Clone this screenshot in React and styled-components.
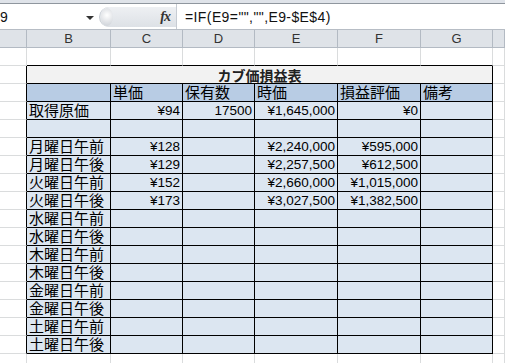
import React from 'react';
import styled, { createGlobalStyle } from 'styled-components';

const GlobalStyle = createGlobalStyle`
    html, body {
        margin: 0;
        padding: 0;
        background: #ffffff;
    }
`;

const COLS = '27px 84px 72px 72px 83px 83px 72px 1fr';
const GRID = '#dadcdd';
const INK = '#000000';

const header = ['', '単価', '保有数', '時価', '損益評価', '備考'];

const days = ['月', '火', '水', '木', '金', '土'];
const halves = ['午前', '午後'];

const values = {
    '月曜日午前': ['¥128', '', '¥2,240,000', '¥595,000'],
    '月曜日午後': ['¥129', '', '¥2,257,500', '¥612,500'],
    '火曜日午前': ['¥152', '', '¥2,660,000', '¥1,015,000'],
    '火曜日午後': ['¥173', '', '¥3,027,500', '¥1,382,500'],
};

const dataRows = [
    ['取得原価', '¥94', '17500', '¥1,645,000', '¥0', ''],
    ['', '', '', '', '', ''],
    ...days.flatMap((d) =>
        halves.map((h) => {
            const label = `${d}曜日${h}`;
            const v = values[label] || ['', '', '', ''];
            return [label, ...v, ''];
        })
    ),
];

export default function App() {
    return (
        <>
            <GlobalStyle />
            <Window>
                <RibbonEdge />
                <FormulaBar>
                    <NameBox>
                        <span>9</span>
                        <Caret />
                    </NameBox>
                    <FxArea>
                        <Handle />
                        <Fx>fx</Fx>
                    </FxArea>
                    <FormulaInput>=IF(E9="","",E9-$E$4)</FormulaInput>
                </FormulaBar>
                <Sheet>
                    {['', 'B', 'C', 'D', 'E', 'F', 'G', ''].map((c, i) => (
                        <ColHead key={'h' + i}>{c}</ColHead>
                    ))}

                    {/* row above the table: its bottom edge is the table top */}
                    {Array.from({ length: 8 }).map((_, i) => (
                        <Cell key={'e' + i} $bb={i >= 1 && i <= 6} />
                    ))}

                    <Cell $rb />
                    <Title $span={6}>カブ価損益表</Title>
                    <Cell />

                    <Cell $rb />
                    {header.map((h, i) => (
                        <Cell key={'t' + i} $bg="#b8cce4" $rb $bb>
                            {h}
                        </Cell>
                    ))}
                    <Cell />

                    {dataRows.map((row, r) => (
                        <React.Fragment key={'r' + r}>
                            <Cell $rb />
                            {row.map((v, c) => (
                                <Cell key={c} $bg="#dce6f1" $rb $bb $num={c > 0}>
                                    {v}
                                </Cell>
                            ))}
                            <Cell />
                        </React.Fragment>
                    ))}

                    {Array.from({ length: 8 }).map((_, i) => (
                        <Cell key={'z' + i} />
                    ))}
                </Sheet>
            </Window>
        </>
    );
}

const Window = styled.div`
    width: 505px;
    height: 363px;
    overflow: hidden;
    background: #ffffff;
    font-family: "Liberation Sans", "Noto Sans CJK JP", sans-serif;
`;

const RibbonEdge = styled.div`
    height: 3px;
    background: #dfe3e9;
    border-bottom: 1px solid #8f969e;
`;

const FormulaBar = styled.div`
    height: 25px;
    display: flex;
    align-items: center;
    border-bottom: 1px solid #b7bdc5;
    background: #ffffff;
`;

const NameBox = styled.div`
    width: 99px;
    height: 100%;
    display: flex;
    align-items: center;
    justify-content: space-between;
    padding-right: 5px;
    box-sizing: border-box;
    font-size: 14px;
    color: #111;
`;

const Caret = styled.div`
    width: 0;
    height: 0;
    border-left: 4px solid transparent;
    border-right: 4px solid transparent;
    border-top: 4px solid #333;
    margin-top: 2px;
`;

const FxArea = styled.div`
    width: 77px;
    height: 20px;
    display: flex;
    align-items: center;
    justify-content: space-between;
    padding: 0 6px 0 1px;
    box-sizing: border-box;
    background: linear-gradient(#eef0f3, #dde1e6);
    border-radius: 10px 0 0 10px;
    border-left: 1px solid #c7ccd3;
`;

const Handle = styled.div`
    width: 12px;
    height: 18px;
    border-radius: 50%;
    background: radial-gradient(circle at 50% 40%, #ffffff 0, #e6e8eb 45%, #c9ced5 100%);
`;

const Fx = styled.span`
    font-family: "Liberation Serif", serif;
    font-style: italic;
    font-weight: bold;
    font-size: 14px;
    color: #333;
    letter-spacing: -1px;
`;

const FormulaInput = styled.div`
    flex: 1;
    height: 100%;
    display: flex;
    align-items: center;
    padding-left: 8px;
    border-left: 1px solid #c7ccd3;
    font-size: 14px;
    letter-spacing: 0.4px;
    color: #111;
    white-space: nowrap;
`;

const Sheet = styled.div`
    display: grid;
    grid-template-columns: ${COLS};
    grid-template-rows: 18px;
    grid-auto-rows: 18px;
`;

const ColHead = styled.div`
    box-sizing: border-box;
    background: #dfe3e8;
    border-right: 1px solid #b3bac3;
    border-bottom: 1px solid #b3bac3;
    display: flex;
    align-items: center;
    justify-content: center;
    font-size: 13px;
    color: #333;
`;

const Cell = styled.div`
    box-sizing: border-box;
    min-width: 0;
    overflow: hidden;
    white-space: nowrap;
    background: ${({ $bg }) => $bg || 'transparent'};
    border-right: 1px solid ${({ $rb }) => ($rb ? INK : GRID)};
    border-bottom: 1px solid ${({ $bb }) => ($bb ? INK : GRID)};
    display: flex;
    align-items: center;
    justify-content: ${({ $num }) => ($num ? 'flex-end' : 'flex-start')};
    padding: 0 2px 0 2px;
    font-size: ${({ $num }) => ($num ? '13.5px' : '15px')};
    color: #000;
    line-height: 17px;
`;

const Title = styled(Cell)`
    grid-column: span ${({ $span }) => $span};
    overflow: visible;
    background: #f2f2f2;
    border-right: 1px solid ${INK};
    border-bottom: 1px solid ${INK};
    justify-content: center;
    font-family: "Noto Sans CJK JP", sans-serif;
    font-weight: bold;
    font-size: 14px;
    line-height: 16px;
    color: #222;
`;
